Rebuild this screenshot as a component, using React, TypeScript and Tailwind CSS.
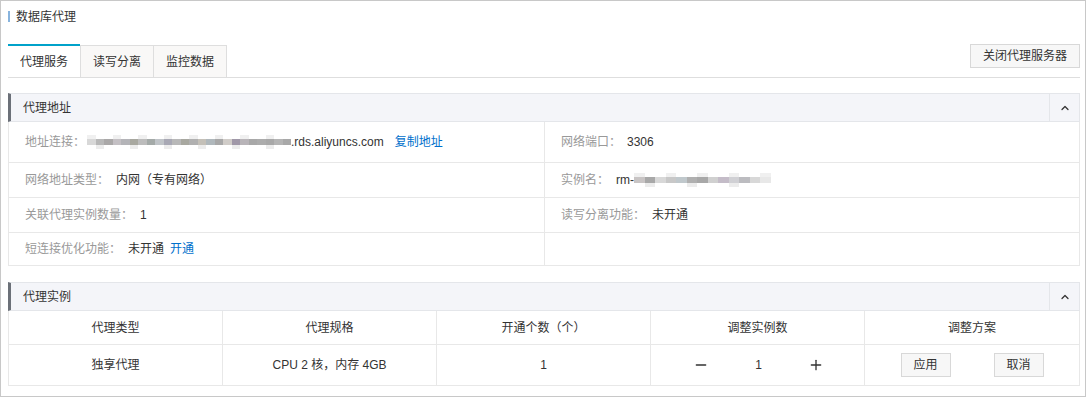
import { ChevronUp, Minus, Plus } from 'lucide-react'

const font = { fontFamily: '"Liberation Sans", "Noto Sans CJK SC", sans-serif' }

const blurA = ['#d8d8d8', '#b8b8b8', '#aaa8a8', '#c4c0c4', '#b4b4b8', '#a8a8a0', '#bcbcbc', '#a4aaa8', '#c0c4c8', '#a8a8b4', '#b8b8b8', '#a8a8a0', '#b0b0b0', '#c4c0b8', '#b0b8bc', '#a8a8a8', '#d0ccc8', '#a098a8', '#b8b4b8', '#a8a8a8', '#acacac', '#a8a8a8', '#b4b4b4', '#a8a8a8']
const blurB = ['#c8c4c4', '#a8a8a8', '#d8d8d8', '#c8c8c8', '#c0c8cc', '#b0b0b0', '#a8a8a8', '#d0d0d0', '#c4bcc8', '#d0d0d4', '#bcbcc0', '#d8d8d8', '#e8e8e8']

function Blur({ colors, w }: { colors: string[]; w: number }) {
  return (
    <span className="inline-flex h-[14px] items-stretch">
      {colors.map((c, i) => (
        <span key={i} className="flex flex-col" style={{ width: w }}>
          <span className="h-[4px]" style={{ background: i % 3 === 0 ? '#f0f0f0' : '#fff' }} />
          <span className="h-[6px]" style={{ background: c }} />
          <span className="h-[4px]" style={{ background: i % 4 === 1 ? '#ececec' : '#fff' }} />
        </span>
      ))}
    </span>
  )
}

function SectionHeader({ title }: { title: string }) {
  return (
    <div className="flex h-[29px] items-stretch border border-[#e4e6ea] border-l-[3px] border-l-[#6b7078] bg-[#f4f5f9]">
      <div className="flex flex-1 items-center pl-[12px] text-[12px] text-[#333]">{title}</div>
      <div className="flex w-[30px] items-center justify-center border-l border-[#e4e6ea]">
        <ChevronUp className="h-[12px] w-[12px] text-[#333]" strokeWidth={2.5} />
      </div>
    </div>
  )
}

function Cell({ label, children, h, gap = 'ml-[7px]' }: { label: string; children?: React.ReactNode; h: string; gap?: string }) {
  return (
    <div className={`flex items-center pl-[16px] text-[12px] ${h}`}>
      {label && <span className="text-[#999]">{label}</span>}
      <span className={`flex items-center text-[#333] ${gap}`}>{children}</span>
    </div>
  )
}

export default function App() {
  return (
    <div className="h-[397px] w-[1087px] bg-white" style={font}>
      <div className="h-[397px] w-[1086px] border border-[#c8c8c8] pl-[7px] pr-[5px]">
        {/* Title */}
        <div className="flex h-[31px] items-center">
          <span className="mr-[6px] h-[11px] w-[2px] bg-[#88b4de]" />
          <span className="text-[12px] text-[#333]">数据库代理</span>
        </div>

        {/* Tabs */}
        <div className="mt-[12px] flex items-end border-b border-[#dedede]">
          <div className="flex h-[33px] w-[72px] items-center justify-center border-t-2 border-[#00a2ca] bg-white text-[12px] text-[#333]">
            代理服务
          </div>
          <div className="mb-[-1px] flex h-[33px] w-[74px] items-center justify-center border border-[#dedede] bg-[#f9f8f7] text-[12px] text-[#333]">
            读写分离
          </div>
          <div className="mb-[-1px] ml-[-1px] flex h-[33px] w-[74px] items-center justify-center border border-[#dedede] bg-[#f9f8f7] text-[12px] text-[#333]">
            监控数据
          </div>
          <div className="flex-1" />
          <button className="mb-[9px] h-[24px] w-[110px] border border-[#d8d8d8] bg-[#f7f7f7] text-[12px] text-[#333]">
            关闭代理服务器
          </button>
        </div>

        {/* 代理地址 */}
        <div className="mt-[15px]">
          <SectionHeader title="代理地址" />
          <div className="grid grid-cols-[536px_1fr] border-x border-b border-[#e8e8e8]">
            <div className="border-b border-r border-[#e8e8e8]">
              <Cell label="地址连接：" h="h-[40px]" gap="ml-[2px]">
                <Blur colors={blurA} w={8.5} />
                <span>.rds.aliyuncs.com</span>
                <span className="ml-[11px] text-[#0070cc]">复制地址</span>
              </Cell>
            </div>
            <div className="border-b border-[#e8e8e8]">
              <Cell label="网络端口：" h="h-[40px]" gap="ml-[6px]">3306</Cell>
            </div>
            <div className="border-b border-r border-[#e8e8e8]">
              <Cell label="网络地址类型：" h="h-[34px]">内网（专有网络）</Cell>
            </div>
            <div className="border-b border-[#e8e8e8]">
              <Cell label="实例名：" h="h-[34px]">
                rm-
                <Blur colors={blurB} w={10.5} />
              </Cell>
            </div>
            <div className="border-b border-r border-[#e8e8e8]">
              <Cell label="关联代理实例数量：" h="h-[34px]">1</Cell>
            </div>
            <div className="border-b border-[#e8e8e8]">
              <Cell label="读写分离功能：" h="h-[34px]">未开通</Cell>
            </div>
            <div className="border-r border-[#e8e8e8]">
              <Cell label="短连接优化功能：" h="h-[32px]">
                未开通<span className="ml-[6px] text-[#0070cc]">开通</span>
              </Cell>
            </div>
            <div />
          </div>
        </div>

        {/* 代理实例 */}
        <div className="mt-[16px]">
          <SectionHeader title="代理实例" />
          <div className="grid grid-cols-5 border-x border-b border-[#e8e8e8] text-[12px] text-[#333]">
            {['代理类型', '代理规格', '开通个数（个）', '调整实例数', '调整方案'].map((t, i) => (
              <div
                key={t}
                className={`flex h-[34px] items-center justify-center border-b border-[#e8e8e8] ${i < 4 ? 'border-r' : ''}`}
              >
                {t}
              </div>
            ))}
            <div className="flex h-[40px] items-center justify-center border-r border-[#e8e8e8]">独享代理</div>
            <div className="flex h-[40px] items-center justify-center border-r border-[#e8e8e8]">CPU 2 核，内存 4GB</div>
            <div className="flex h-[40px] items-center justify-center border-r border-[#e8e8e8]">1</div>
            <div className="flex h-[40px] items-center justify-center gap-[46px] border-r border-[#e8e8e8] pl-[2px]">
              <Minus className="h-[16px] w-[16px] text-[#333]" strokeWidth={2} />
              <span>1</span>
              <Plus className="h-[16px] w-[16px] text-[#333]" strokeWidth={2} />
            </div>
            <div className="flex h-[40px] items-center justify-center gap-[43px]">
              <button className="h-[24px] w-[50px] border border-[#d8d8d8] bg-[#f7f7f7] text-[12px] text-[#333]">应用</button>
              <button className="h-[24px] w-[50px] border border-[#d8d8d8] bg-[#f7f7f7] text-[12px] text-[#333]">取消</button>
            </div>
          </div>
        </div>
      </div>
    </div>
  )
}
